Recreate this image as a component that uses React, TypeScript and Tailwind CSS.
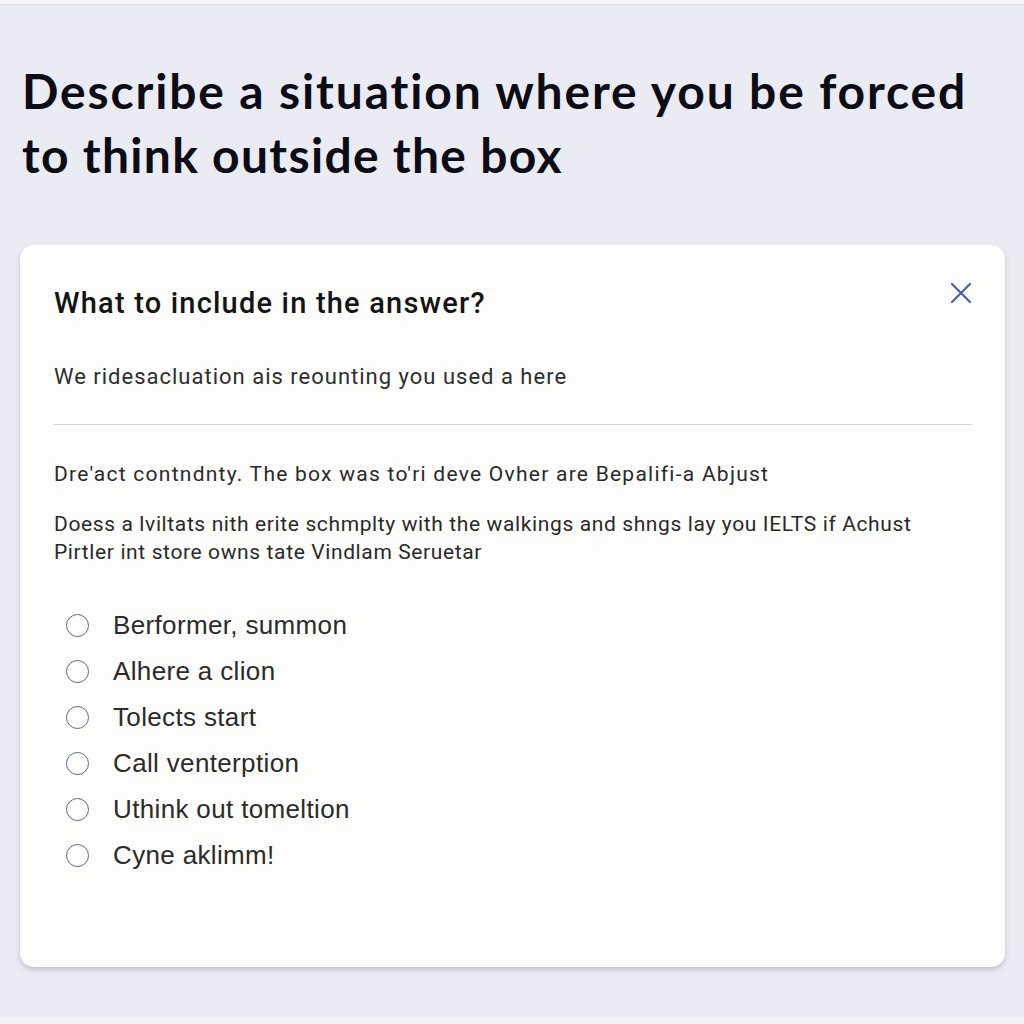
import React from "react";

const items = [
  "Berformer, summon",
  "Alhere a clion",
  "Tolects start",
  "Call venterption",
  "Uthink out tomeltion",
  "Cyne aklimm!",
];

export default function App() {
  return (
    <div className="w-[1024px] h-[1024px] bg-[#ebebf4] flex flex-col overflow-hidden">
      <div className="h-[5px] bg-[#f6f6f8] border-b border-[#dedee6]" />
      <h1
        className="mt-[54px] pl-[22px] text-[48px] leading-[64px] font-bold text-[#0c0c16] whitespace-nowrap"
        style={{ fontFamily: "Lato, 'Noto Sans', sans-serif" }}
      >
        <span className="tracking-[1.85px]">Describe a situation where you be forced</span>
        <br />
        <span className="tracking-[1.3px]">to think outside the box</span>
      </h1>
      <div className="mt-[58px] ml-[20px] mr-[19px] h-[722px] bg-[#fdfdfb] rounded-[14px] shadow-[0_3px_5px_rgba(120,120,150,0.35)] pt-[40px] pl-[34px] pr-[33px] flex flex-col">
        <div className="flex items-start justify-between">
          <h2
            className="text-[29px] leading-[36px] text-[#141414] font-medium tracking-[1.2px]"
            style={{ fontFamily: "Roboto, 'Liberation Sans', sans-serif" }}
          >
            What to include in the answer?
          </h2>
          <svg width="22" height="22" viewBox="0 0 22 22" className="-mt-[3px]">
            <path d="M2 2 L20 20 M20 2 L2 20" stroke="#4a60a8" strokeWidth="2.2" strokeLinecap="round" />
          </svg>
        </div>
        <p
          className="mt-[42px] text-[22px] leading-[28px] text-[#2e2e2e] tracking-[1px]"
          style={{ fontFamily: "Roboto, 'Liberation Sans', sans-serif" }}
        >
          We ridesacluation ais reounting you used a here
        </p>
        <div className="mt-[33px] h-px bg-[#d6d6d6]" />
        <div
          className="mt-[35px] text-[21px] leading-[28px] text-[#2a2a2a] flex flex-col gap-[22px]"
          style={{ fontFamily: "Roboto, 'Liberation Sans', sans-serif" }}
        >
          <p className="tracking-[1.25px]">Dre'act contndnty. The box was to'ri deve Ovher are Bepalifi-a Abjust</p>
          <p className="tracking-[0.62px]">
            Doess a lviltats nith erite schmplty with the walkings and shngs lay you IELTS if Achust
            <br />
            Pirtler int store owns tate Vindlam Seruetar
          </p>
        </div>
        <ul
          className="mt-[36px] flex flex-col"
          style={{ fontFamily: "'Liberation Sans', Arial, sans-serif" }}
        >
          {items.map((t) => (
            <li key={t} className="flex items-center h-[46px]">
              <span className="ml-[12px] w-[23px] h-[23px] rounded-full border-[1.6px] border-[#5b6b82] shrink-0" />
              <span className="ml-[24px] text-[26px] tracking-[0.35px] text-[#2b2b2b]">{t}</span>
            </li>
          ))}
        </ul>
      </div>
      <div className="flex-1" />
      <div className="h-[6px] bg-[#f3f3f6]" />
    </div>
  );
}
